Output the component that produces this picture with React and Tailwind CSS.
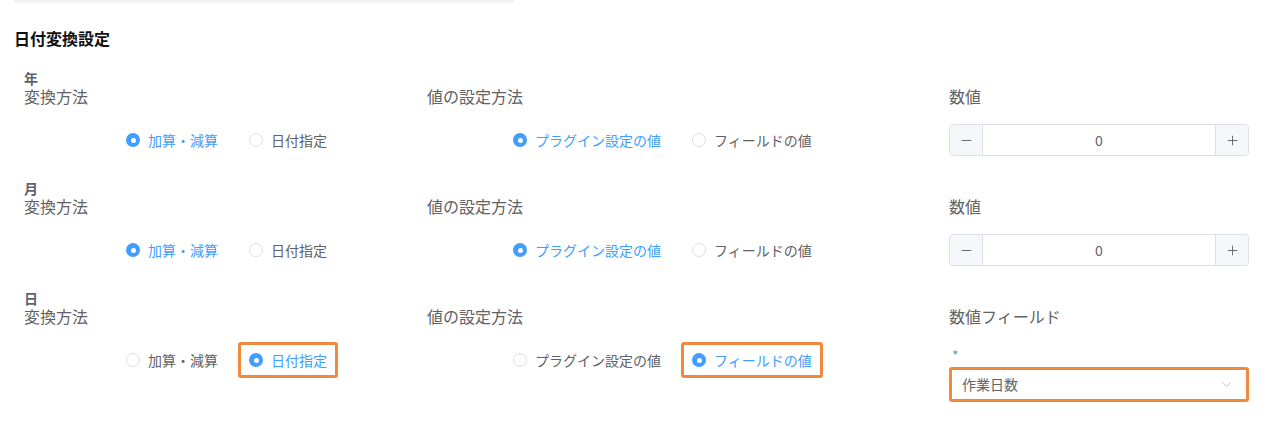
import { Minus, Plus, ChevronDown } from 'lucide-react';

const font = { fontFamily: '"Noto Sans CJK JP", "Noto Sans", sans-serif' };

const rows = [
  { unit: '年', calc: 'add', source: 'plugin' },
  { unit: '月', calc: 'add', source: 'plugin' },
  { unit: '日', calc: 'date', source: 'field' },
];

function Radio({ label, checked, marked }) {
  const item = (
    <label className="flex items-center gap-2 h-5 cursor-pointer">
      <span
        className={
          checked
            ? 'w-[14px] h-[14px] rounded-full bg-[#409eff] flex items-center justify-center'
            : 'w-[14px] h-[14px] rounded-full border border-[#dcdfe6] bg-white'
        }
      >
        {checked && <span className="w-[5px] h-[5px] rounded-full bg-white" />}
      </span>
      <span className={checked ? 'text-[14px] text-[#409eff]' : 'text-[14px] text-[#606266]'}>{label}</span>
    </label>
  );

  if (!marked) return item;

  // orange annotation box around the selected option
  return (
    <div className="-mx-[11px] -my-[8px] px-[8px] py-[5px] border-[3px] border-[#f0883e] rounded-[3px]">
      {item}
    </div>
  );
}

function NumberInput() {
  return (
    <div className="flex h-8 w-[300px] border border-[#dcdfe6] rounded bg-white overflow-hidden">
      <button className="w-[33px] flex items-center justify-center bg-[#f5f7fa] border-r border-[#dcdfe6] text-[#606266]">
        <Minus size={15} strokeWidth={1.5} />
      </button>
      <div className="flex-1 flex items-center justify-center text-[14px] text-[#606266]">0</div>
      <button className="w-[33px] flex items-center justify-center bg-[#f5f7fa] border-l border-[#dcdfe6] text-[#606266]">
        <Plus size={15} strokeWidth={1.5} />
      </button>
    </div>
  );
}

function FieldSelect() {
  return (
    <div className="mt-[21px]">
      <div className="text-[14px] leading-4 text-[#6f95c4] pl-[3px]">*</div>
      <div className="mt-[4px] h-[35px] w-[300px] border-[3px] border-[#f0883e] rounded-[3px] flex items-center justify-between pl-[10px] pr-[12px]">
        <span className="text-[14px] text-[#606266]">作業日数</span>
        <ChevronDown size={15} strokeWidth={1.5} className="text-[#b8bcc4]" />
      </div>
    </div>
  );
}

function ConvertRow({ unit, calc, source }) {
  const marked = unit === '日';

  return (
    <div className="pl-6">
      <div className="text-[14px] leading-4 font-bold text-[#5f6370]">{unit}</div>
      <div className="grid grid-cols-[403px_522px_300px]">
        <div>
          <div className="text-[16px] leading-5 text-[#606266]">変換方法</div>
          <div className="mt-[18px] h-8 flex items-center gap-[31px] pl-[102px]">
            <Radio label="加算・減算" checked={calc === 'add'} marked={marked && calc === 'add'} />
            <Radio label="日付指定" checked={calc === 'date'} marked={marked && calc === 'date'} />
          </div>
        </div>
        <div>
          <div className="text-[16px] leading-5 text-[#606266]">値の設定方法</div>
          <div className="mt-[18px] h-8 flex items-center gap-[31px] pl-[86px]">
            <Radio label="プラグイン設定の値" checked={source === 'plugin'} marked={marked && source === 'plugin'} />
            <Radio label="フィールドの値" checked={source === 'field'} marked={marked && source === 'field'} />
          </div>
        </div>
        <div>
          <div className="text-[16px] leading-5 text-[#606266]">{source === 'field' ? '数値フィールド' : '数値'}</div>
          {source === 'field' ? (
            <FieldSelect />
          ) : (
            <div className="mt-[18px]">
              <NumberInput />
            </div>
          )}
        </div>
      </div>
    </div>
  );
}

export default function App() {
  return (
    <div className="w-[1277px] h-[438px] bg-white overflow-hidden" style={font}>
      {/* bottom edge of the card above */}
      <div className="ml-[14px] w-[500px] h-[5px] rounded-b bg-gradient-to-b from-[#ededed] to-white" />

      <h2 className="mt-[22px] pl-[14px] text-[16px] leading-[22px] font-bold text-[#111]">日付変換設定</h2>

      <div className="mt-[21px] flex flex-col gap-[24px]">
        {rows.map((r) => (
          <ConvertRow key={r.unit} {...r} />
        ))}
      </div>
    </div>
  );
}
